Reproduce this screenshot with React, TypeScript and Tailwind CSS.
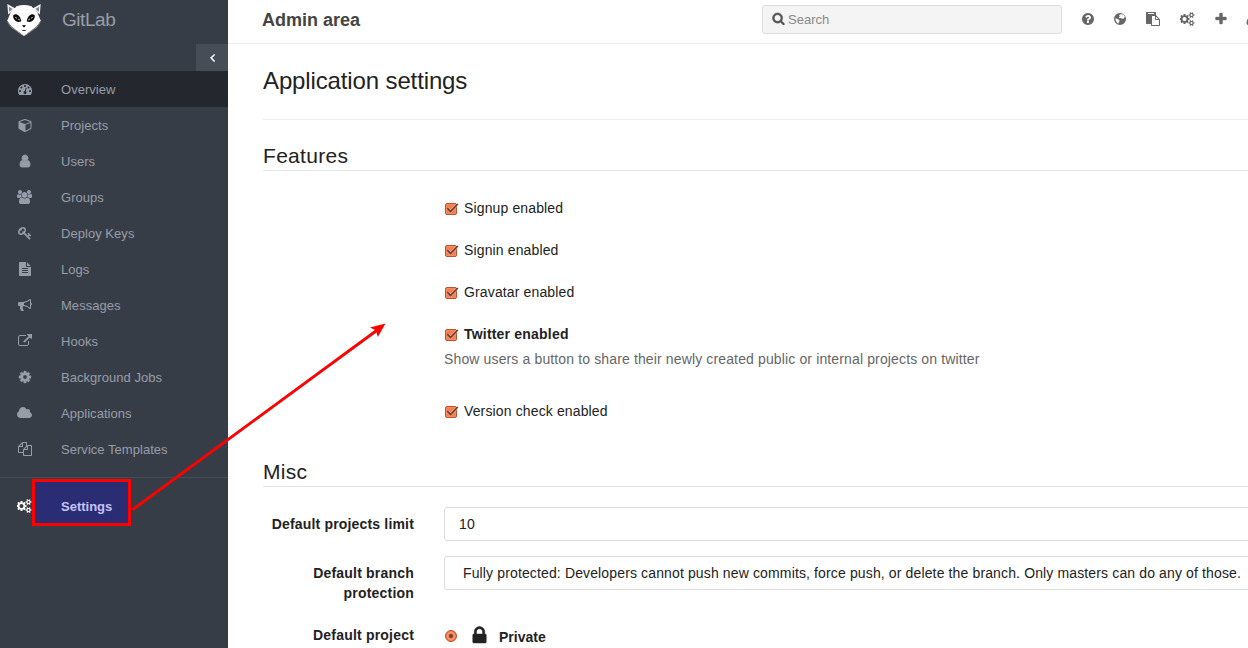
import React from "react";

const paths = {
  dashboard:
    "M384 1152q0-53-37.5-90.5t-90.5-37.5-90.5 37.5-37.5 90.5 37.5 90.5 90.5 37.5 90.5-37.5 37.5-90.5zm192-448q0-53-37.5-90.5t-90.5-37.5-90.5 37.5-37.5 90.5 37.5 90.5 90.5 37.5 90.5-37.5 37.5-90.5zm428 481l101-382q6-26-7.5-48.5t-38.5-29.5-48 6.5-30 39.5l-101 382q-60 5-107 43.5t-63 98.5q-20 77 20 146t117 89 146-20 89-117q16-60-6-117t-72-91zm660-33q0-53-37.5-90.5t-90.5-37.5-90.5 37.5-37.5 90.5 37.5 90.5 90.5 37.5 90.5-37.5 37.5-90.5zm-640-640q0-53-37.5-90.5t-90.5-37.5-90.5 37.5-37.5 90.5 37.5 90.5 90.5 37.5 90.5-37.5 37.5-90.5zm448 192q0-53-37.5-90.5t-90.5-37.5-90.5 37.5-37.5 90.5 37.5 90.5 90.5 37.5 90.5-37.5 37.5-90.5zm320 448q0 261-141 483-19 29-54 29h-1402q-35 0-54-29-141-221-141-483 0-182 71-348t191-286 286-191 348-71 348 71 286 191 191 286 71 348z",
  cube: "M896 1629l640-349v-636l-640 233v752zm-64-865l698-254-698-254-698 254zm832-252v768q0 35-18 65t-49 47l-704 384q-28 16-61 16t-61-16l-704-384q-31-17-49-47t-18-65v-768q0-40 23-73t61-47l704-256q22-8 44-8t44 8l704 256q38 14 61 47t23 73z",
  user: "M1536 1399q0 109-62.5 187t-150.5 78h-854q-88 0-150.5-78t-62.5-187q0-85 8.5-160.5t31.5-152 58.5-131 94-89 134.5-34.5q131 128 313 128t313-128q76 0 134.5 34.5t94 89 58.5 131 31.5 152 8.5 160.5zm-256-887q0 159-112.5 271.5t-271.5 112.5-271.5-112.5-112.5-271.5 112.5-271.5 271.5-112.5 271.5 112.5 112.5 271.5z",
  group:
    "M529 896q-162 5-265 128h-134q-82 0-138-40.5t-56-118.5q0-353 124-353 6 0 43.5 21t97.5 42.5 119 21.5q67 0 133-23-5 37-5 66 0 159 90 290zm1071 637q0 120-73 189.5t-194 69.5h-874q-121 0-194-69.5t-73-189.5q0-53 3.5-103.5t14-109 26.5-108.5 43-97.5 62-81 85.5-53.5 111.5-20q10 0 43 21.5t73 48 107 48 135 21.5 135-21.5 107-48 73-48 43-21.5q61 0 111.5 20t85.5 53.5 62 81 43 97.5 26.5 108.5 14 109 3.5 103.5zm-1024-1277q0 106-75 181t-181 75-181-75-75-181 75-181 181-75 181 75 75 181zm704 384q0 159-112.5 271.5t-271.5 112.5-271.5-112.5-112.5-271.5 112.5-271.5 271.5-112.5 271.5 112.5 112.5 271.5zm576 225q0 78-56 118.5t-138 40.5h-134q-103-123-265-128 90-131 90-290 0-29-5-66 66 23 133 23 59 0 119-21.5t97.5-42.5 43.5-21q124 0 124 353zm-128-609q0 106-75 181t-181 75-181-75-75-181 75-181 181-75 181 75 75 181z",
  key: "M832 512q0-80-56-136t-136-56-136 56-56 136q0 42 19 83-41-19-83-19-80 0-136 56t-56 136 56 136 136 56 136-56 56-136q0-42-19-83 41 19 83 19 80 0 136-56t56-136zm851 704q0 17-49 66t-66 49q-9 0-28.5-16t-36.5-33-38.5-40-24.5-26l-96 96 220 220q28 28 28 68 0 42-39 81t-81 39q-40 0-68-28l-671-671q-176 131-365 131-163 0-265.5-102.5t-102.5-265.5q0-160 95-313t248-248 313-95q163 0 265.5 102.5t102.5 265.5q0 189-131 365l355 355 96-96q-3-3-26-24.5t-40-38.5-33-36.5-16-28.5q0-17 49-66t66-49q13 0 23 10 6 6 46 44.5t82 79.5 86.5 86 73 78 28.5 41z",
  file: "M1596 476q14 14 28 36h-472v-472q22 14 36 28zm-476 164h544v1056q0 40-28 68t-68 28h-1344q-40 0-68-28t-28-68v-1600q0-40 28-68t68-28h800v544q0 40 28 68t68 28zm160 736v-64q0-14-9-23t-23-9h-704q-14 0-23 9t-9 23v64q0 14 9 23t23 9h704q14 0 23-9t9-23zm0-256v-64q0-14-9-23t-23-9h-704q-14 0-23 9t-9 23v64q0 14 9 23t23 9h704q14 0 23-9t9-23zm0-256v-64q0-14-9-23t-23-9h-704q-14 0-23 9t-9 23v64q0 14 9 23t23 9h704q14 0 23-9t9-23z",
  bullhorn:
    "M1664 640q53 0 90.5 37.5t37.5 90.5-37.5 90.5-90.5 37.5v384q0 52-38 90t-90 38q-417-347-812-380-58 19-91 66t-31 100.5 40 92.5q-20 33-23 65.5t6 58 33.5 55 48 50 61.5 50.5q-29 58-111.5 83t-168.5 11.5-132-55.5q-7-23-29.5-87.5t-32-94.5-23-89-15-101 3.5-98.5 22-110.5h-122q-66 0-113-47t-47-113v-192q0-66 47-113t113-47h480q435 0 896-384 52 0 90 38t38 90v384zm-128 604v-954q-394 302-768 343v270q377 42 768 341z",
  external:
    "M1408 928v320q0 119-84.5 203.5t-203.5 84.5h-832q-119 0-203.5-84.5t-84.5-203.5v-832q0-119 84.5-203.5t203.5-84.5h704q14 0 23 9t9 23v64q0 14-9 23t-23 9h-704q-66 0-113 47t-47 113v832q0 66 47 113t113 47h832q66 0 113-47t47-113v-320q0-14 9-23t23-9h64q14 0 23 9t9 23zm384-864v512q0 26-19 45t-45 19-45-19l-176-176-652 652q-10 10-23 10t-23-10l-114-114q-10-10-10-23t10-23l652-652-176-176q-19-19-19-45t19-45 45-19h512q26 0 45 19t19 45z",
  cog: "M1152 896q0-106-75-181t-181-75-181 75-75 181 75 181 181 75 181-75 75-181zm512-109v222q0 12-8 23t-20 13l-185 28q-19 54-39 91 35 50 107 138 10 12 10 25t-9 23q-27 37-99 108t-94 71q-12 0-26-9l-138-108q-44 23-91 38-16 136-29 186-7 28-36 28h-222q-14 0-24.5-8.5t-11.5-21.5l-28-184q-49-16-90-37l-141 107q-10 9-25 9-14 0-25-11-126-114-165-168-7-10-7-23 0-12 8-23 15-21 51-66.5t54-70.5q-27-50-41-99l-183-27q-13-2-21-12.5t-8-23.5v-222q0-12 8-23t19-13l186-28q14-46 39-92-40-57-107-138-10-12-10-24 0-10 9-23 26-36 98.5-107.5t94.5-71.5q13 0 26 10l138 107q44-23 91-38 16-136 29-186 7-28 36-28h222q14 0 24.5 8.5t11.5 21.5l28 184q49 16 90 37l142-107q9-9 24-9 13 0 25 10 129 119 165 170 7 8 7 22 0 12-8 23-15 21-51 66.5t-54 70.5q26 50 41 98l183 28q13 2 21 12.5t8 23.5z",
  cloud:
    "M1920 1152q0 159-112.5 271.5t-271.5 112.5h-1088q-185 0-316.5-131.5t-131.5-316.5q0-132 71-241.5t187-163.5q-2-28-2-43 0-212 150-362t362-150q158 0 286.5 88t187.5 230q70-62 166-62 106 0 181 75t75 181q0 75-41 138 129 30 213 134.5t84 239.5z",
  copy: "M1696 384q40 0 68 28t28 68v1216q0 40-28 68t-68 28h-960q-40 0-68-28t-28-68v-288h-544q-40 0-68-28t-28-68v-672q0-40 20-88t48-76l408-408q28-28 76-48t88-20h416q40 0 68 28t28 68v328q68-40 128-40h416zm-544 213l-299 299h299v-299zm-640-384l-299 299h299v-299zm196 647l316-316v-416h-384v416q0 40-28 68t-68 28h-416v640h512v-256q0-40 20-88t48-76zm956 804v-1152h-384v416q0 40-28 68t-68 28h-416v640h896z",
  cogs: "M832 896q0-106-75-181t-181-75-181 75-75 181 75 181 181 75 181-75 75-181zm768 512q0-52-38-90t-90-38-90 38-38 90q0 53 37.5 90.5t90.5 37.5 90.5-37.5 37.5-90.5zm0-1024q0-52-38-90t-90-38-90 38-38 90q0 53 37.5 90.5t90.5 37.5 90.5-37.5 37.5-90.5zm-384 421v185q0 10-7 19.5t-16 10.5l-155 24q-11 35-32 76 34 48 90 115 7 11 7 20 0 12-7 19-23 30-82.5 89.5t-78.5 59.5q-11 0-21-7l-115-90q-37 19-77 31-11 108-23 155-7 24-30 24h-186q-11 0-20-7.5t-10-17.5l-23-153q-34-10-75-31l-118 89q-7 7-20 7-11 0-21-8-144-133-144-160 0-9 7-19 10-14 41-53t47-61q-23-44-35-82l-152-24q-10-1-17-9.5t-7-19.5v-185q0-10 7-19.5t16-10.5l155-24q11-35 32-76-34-48-90-115-7-11-7-20 0-12 7-20 22-30 82-89t79-59q11 0 21 7l115 90q34-18 77-32 11-108 23-154 7-24 30-24h186q11 0 20 7.5t10 17.5l23 153q34 10 75 31l118-89q8-7 20-7 11 0 21 8 144 133 144 160 0 8-7 19-12 16-42 54t-45 60q23 48 34 82l152 23q10 2 17 10.5t7 19.5zm640 533v140q0 16-149 31-12 27-30 52 51 113 51 138 0 4-4 7-122 71-124 71-8 0-46-47t-52-68q-20 2-30 2t-30-2q-14 21-52 68t-46 47q-2 0-124-71-4-3-4-7 0-25 51-138-18-25-30-52-149-15-149-31v-140q0-16 149-31 13-29 30-52-51-113-51-138 0-4 4-7 4-2 35-20t59-34 30-16q8 0 46 46.5t52 67.5q20-2 30-2t30 2q51-71 92-112l6-2q4 0 124 70 4 3 4 7 0 25-51 138 17 23 30 52 149 15 149 31zm0-1024v140q0 16-149 31-12 27-30 52 51 113 51 138 0 4-4 7-122 71-124 71-8 0-46-47t-52-68q-20 2-30 2t-30-2q-14 21-52 68t-46 47q-2 0-124-71-4-3-4-7 0-25 51-138-18-25-30-52-149-15-149-31v-140q0-16 149-31 13-29 30-52-51-113-51-138 0-4 4-7 4-2 35-20t59-34 30-16q8 0 46 46.5t52 67.5q20-2 30-2t30 2q51-71 92-112l6-2q4 0 124 70 4 3 4 7 0 25-51 138 17 23 30 52 149 15 149 31z",
  lock: "M640 768h512v-192q0-106-75-181t-181-75-181 75-75 181v192zm832 96v576q0 40-28 68t-68 28h-960q-40 0-68-28t-28-68v-576q0-40 28-68t68-28h32v-192q0-184 132-316t316-132 316 132 132 316v192h32q40 0 68 28t28 68z",
  plus: "M1600 736v192q0 40-28 68t-68 28h-416v416q0 40-28 68t-68 28h-192q-40 0-68-28t-28-68v-416h-416q-40 0-68-28t-28-68v-192q0-40 28-68t68-28h416v-416q0-40 28-68t68-28h192q40 0 68 28t28 68v416h416q40 0 68 28t28 68z",
  search:
    "M1216 832q0-185-131.5-316.5t-316.5-131.5-316.5 131.5-131.5 316.5 131.5 316.5 316.5 131.5 316.5-131.5 131.5-316.5zm512 832q0 52-38 90t-90 38q-54 0-90-38l-343-342q-179 124-399 124-143 0-273.5-55.5t-225-150-150-225-55.5-273.5 55.5-273.5 150-225 225-150 273.5-55.5 273.5 55.5 225 150 150 225 55.5 273.5q0 220-124 399l343 343q37 37 37 90z",
  question:
    "M1024 1376v-192q0-14-9-23t-23-9h-192q-14 0-23 9t-9 23v192q0 14 9 23t23 9h192q14 0 23-9t9-23zm256-672q0-88-55.5-163t-138.5-116-170-41q-243 0-371 213-15 24 8 42l132 100q7 6 19 6 16 0 25-12 53-68 86-92 34-24 86-24 48 0 85.5 26t37.5 59q0 38-20 61t-68 45q-63 28-115.5 86.5t-52.5 125.5v36q0 14 9 23t23 9h192q14 0 23-9t9-23q0-19 21.5-49.5t54.5-49.5q32-18 49-28.5t46-35 44.5-48 28-60.5 12.5-81zm384 192q0 209-103 385.5t-279.5 279.5-385.5 103-385.5-103-279.5-279.5-103-385.5 103-385.5 279.5-279.5 385.5-103 385.5 103 279.5 279.5 103 385.5z",
  globe:
    "M896 128a768 768 0 1 1 0 1536a768 768 0 1 1 0-1536zM1010 300l-160 60-70 130 100 90-130 110 60 110 190-40 130 110 250-30 140-230-130-230-200-100zM300 860l60 260 150 240 190 150 30-210 130-150-130-200-220-40-90-110z",
  paste:
    "M768 1664h896v-640h-416q-40 0-68-28t-28-68v-416h-384v1152zm256-1440v-64q0-13-9.500-22.500t-22.500-9.500h-704q-13 0-22.500 9.500t-9.500 22.500v64q0 13 9.500 22.500t22.500 9.500h704q13 0 22.500-9.500t9.500-22.500zm256 672h299l-299-299v299zm512 128v672q0 40-28 68t-68 28h-960q-40 0-68-28t-28-68v-160h-544q-40 0-68-28t-28-68v-1344q0-40 28-68t68-28h1088q40 0 68 28t28 68v328q21 13 36 28l408 408q28 28 48 76t20 88z",
  angleLeft:
    "M1203 544q0 13-10 23l-393 393 393 393q10 10 10 23t-10 23l-50 50q-10 10-23 10t-23-10l-466-466q-10-10-10-23t10-23l466-466q10-10 23-10t23 10l50 50q10 10 10 23z",
};

type IconName = keyof typeof paths;

const boxes: Partial<Record<IconName, string>> = {
  cube: "-64 0 1792 1792",
  group: "-64 0 1920 1792",
  cloud: "0 0 1920 1792",
  cogs: "0 0 1920 1792",
};

const weights: Partial<Record<IconName, number>> = {
  user: 110,
  plus: 50,
  search: 60,
  angleLeft: 90,
  cog: 50,
  lock: 40,
};

function Icon({ name, className }: { name: IconName; className: string }) {
  return (
    <svg
      viewBox={boxes[name] ?? "0 0 1792 1792"}
      className={`shrink-0 ${className}`}
      fill="currentColor"
      fillRule="evenodd"
      stroke={weights[name] ? "currentColor" : "none"}
      strokeWidth={weights[name]}
      aria-hidden="true"
    >
      <path d={paths[name]} />
    </svg>
  );
}

function Logo() {
  return (
    <svg viewBox="0 0 36 34" className="h-[34px] w-9" aria-hidden="true">
      <path d="M1.300 1 9.500 5.500 2.200 11.500ZM34.700 1 26.500 5.500 33.800 11.500Z" fill="#f4f4f4" />
      <path d="M2.800 3.700 6.500 6 3.200 9ZM33.200 3.700 29.500 6 32.800 9Z" fill="#80848a" />
      <path d="M10.500 3.200Q18 .8 25.500 3.200L31.500 10 34.800 17.800 30.500 23.500 18 33 5.500 23.500 1.200 17.800 4.500 10Z" fill="#fff" />
      <path d="M1.800 19.200 5 24 16.500 32.200M34.200 19.200 31 24 19.500 32.200" stroke="#8d9197" strokeWidth=".9" fill="none" />
      <path
        d="M7.300 12.300C9.500 10 14 11.500 15.300 18.200C12.500 20 9 18.500 7.800 15.800C7.200 14.500 7 13.300 7.300 12.300ZM28.700 12.300C26.500 10 22 11.500 20.700 18.200C23.500 20 27 18.500 28.200 15.800C28.800 14.500 29 13.300 28.700 12.300Z"
        fill="#0c0c0c"
      />
      <path d="M9.300 14.300 13.800 17M26.700 14.300 22.200 17" stroke="#d8d8d8" strokeWidth="1" />
      <path d="M11.200 14.800 11.800 16.400M24.800 14.800 24.200 16.400" stroke="#0c0c0c" strokeWidth="1.200" />
      <path d="M16 22H20L18.700 24.300H17.300ZM16.400 27H19.600V27.900H16.400Z" fill="#2a2a2a" />
    </svg>
  );
}

const nav: { icon: IconName; label: string; wide?: boolean }[] = [
  { icon: "dashboard", label: "Overview" },
  { icon: "cube", label: "Projects" },
  { icon: "user", label: "Users" },
  { icon: "group", label: "Groups", wide: true },
  { icon: "key", label: "Deploy Keys" },
  { icon: "file", label: "Logs" },
  { icon: "bullhorn", label: "Messages" },
  { icon: "external", label: "Hooks" },
  { icon: "cog", label: "Background Jobs" },
  { icon: "cloud", label: "Applications", wide: true },
  { icon: "copy", label: "Service Templates" },
];

function Sidebar() {
  return (
    <aside className="flex h-full w-[228px] shrink-0 flex-col bg-[#373d47] text-[13px] text-[#979da8]">
      <div className="flex h-11 items-start pl-1.5">
        <div className="pt-[3px]">
          <Logo />
        </div>
        <span className="pl-5 text-[19px] leading-10 tracking-[-0.45px]">GitLab</span>
      </div>
      <button className="flex h-[27px] w-8 items-center justify-center self-end bg-[#474d57] text-white">
        <Icon name="angleLeft" className="size-[13px]" />
      </button>
      <nav>
        {nav.map((item, i) => (
          <a key={item.label} className={`flex h-9 items-center ${i === 0 ? "bg-[#24272d]" : ""}`}>
            <span className="flex w-[49px] justify-center">
              <Icon name={item.icon} className={item.wide ? "h-[14px] w-[15px]" : "size-[14px]"} />
            </span>
            <span className="pt-px pl-3 tracking-[0.04px]">{item.label}</span>
          </a>
        ))}
      </nav>
      <div className="mt-2.5 flex border-t border-[#474d57] pt-px">
        <span className="flex w-8 items-center pt-[7px] pl-[17px] text-white">
          <Icon name="cogs" className="h-[14px] w-[15px]" />
        </span>
        <span className="flex h-[47px] w-[99px] items-center border-[3px] border-[#fe0000] bg-[#2a2d74] pt-2 pl-[26px] font-bold text-[#c5c3fb]">
          Settings
        </span>
      </div>
    </aside>
  );
}

function TopBar() {
  return (
    <header className="flex h-11 shrink-0 items-start border-b border-[#ececec] pl-[34px]">
      <h1 className="w-[500px] shrink-0 text-lg leading-10 font-bold text-[#444]">Admin area</h1>
      <div className="mt-[5px] flex h-[29px] w-[300px] shrink-0 items-center rounded-[3px] border border-[#dcdcdc] bg-[#f4f4f4] pl-[9px] text-[13px] text-[#888]">
        <Icon name="search" className="mr-[3px] mb-0.5 size-[13px] text-[#555]" />
        Search
      </div>
      <div className="flex h-[38px] shrink-0 items-center pl-[19px] text-[#666]">
        <Icon name="question" className="mr-[18px] size-[14px]" />
        <Icon name="globe" className="mr-[19px] size-[14px]" />
        <Icon name="paste" className="mr-5 size-[14px]" />
        <Icon name="cogs" className="mr-[19px] h-[14px] w-[15px]" />
        <Icon name="plus" className="mr-[17px] size-[14px]" />
        <Icon name="user" className="size-[14px]" />
      </div>
    </header>
  );
}

function Check({ label, bold, className }: { label: string; bold?: boolean; className?: string }) {
  return (
    <label className={`ml-[181px] flex h-5 items-center ${className ?? ""}`}>
      <svg viewBox="0 0 15 14" className="mt-0.5 mr-[5px] h-[14px] w-[15px]" aria-hidden="true">
        <rect x="1.500" y="1.500" width="11" height="11" rx="1.500" fill="#f47c4e" stroke="#b9532f" />
        <rect x="2.500" y="2.500" width="9" height="9" rx=".5" fill="none" stroke="#fa9468" strokeWidth=".6" />
        <path d="M3.500 6.300 6.500 9.500 12.500 3.300" fill="none" stroke="#fbb290" strokeWidth="2.800" />
        <path d="M3.300 6.200 6.500 9.600 13.800 2" fill="none" stroke="#6a3d30" strokeWidth="1.700" />
      </svg>
      <span className={bold ? "font-bold tracking-[0.2px]" : ""}>{label}</span>
    </label>
  );
}

function Legend({ children }: { children: React.ReactNode }) {
  return <h3 className="h-[29px] border-b border-[#e5e5e5] text-[21px] leading-7 tracking-[0.3px] text-[#222]">{children}</h3>;
}

export default function App() {
  return (
    <div className="relative flex h-[648px] w-[1248px] overflow-hidden bg-white font-['Liberation_Sans',Arial,sans-serif]">
      <Sidebar />
      <div className="flex min-w-0 flex-1 flex-col overflow-hidden">
        <TopBar />
        <main className="pl-[35px] text-sm leading-5 tracking-[0.135px] text-[#222]">
          <h2 className="h-[76px] border-b border-[#eee] pt-5 text-2xl leading-[34px] tracking-[-0.13px]">Application settings</h2>
          <div className="pt-[22px]">
            <Legend>Features</Legend>
          </div>
          <div className="pt-[27px]">
            <Check label="Signup enabled" />
            <Check label="Signin enabled" className="mt-[22px]" />
            <Check label="Gravatar enabled" className="mt-[22px]" />
            <Check label="Twitter enabled" bold className="mt-[22px]" />
            <p className="mt-[5px] ml-[181px] text-[#666]">
              Show users a button to share their newly created public or internal projects on twitter
            </p>
            <Check label="Version check enabled" className="mt-8" />
          </div>
          <div className="pt-[37px]">
            <Legend>Misc</Legend>
          </div>
          <div className="mt-5 flex">
            <label className="w-[151px] shrink-0 pt-[7px] text-right font-bold tracking-[0.17px]">Default projects limit</label>
            <div className="ml-[30px] flex h-[34px] w-[850px] shrink-0 items-center rounded-[3px] border border-[#dcdcdc] pl-[14px]">10</div>
          </div>
          <div className="mt-[15px] flex">
            <label className="w-[151px] shrink-0 pt-[7px] text-right font-bold tracking-[0.2px]">
              Default branch
              <br />
              protection
            </label>
            <div className="ml-[30px] flex h-[34px] w-[850px] shrink-0 items-center rounded-[3px] border border-[#dcdcdc] pl-[18px] whitespace-nowrap">
              Fully protected: Developers cannot push new commits, force push, or delete the branch. Only masters can do any of those.
            </div>
          </div>
          <div className="mt-[22px] flex h-5 items-center font-bold">
            <span className="w-[151px] text-right tracking-[0.2px]">Default project</span>
            <svg viewBox="0 0 14 14" className="mt-0.5 ml-[30px] size-[14px]" aria-hidden="true">
              <circle cx="7" cy="7" r="5.500" fill="#f47c4e" stroke="#b9532f" />
              <circle cx="7" cy="7" r="3.600" fill="none" stroke="#fba986" strokeWidth=".8" />
              <circle cx="7" cy="7" r="1.900" fill="#6a3d30" />
            </svg>
            <Icon name="lock" className="ml-[11px] size-[21px]" />
            <span className="ml-[9px] pt-1 tracking-normal">Private</span>
          </div>
        </main>
      </div>
      <svg viewBox="0 0 270 200" className="pointer-events-none absolute top-[318px] left-[126px] h-[200px] w-[270px]" aria-hidden="true">
        <path d="M7.500 191 252 11.500" stroke="#fe0000" strokeWidth="2.800" strokeLinecap="round" />
        <path d="M259.500 5.500 251.800 19 250 12.500 244 9.500Z" fill="#fe0000" />
      </svg>
    </div>
  );
}
